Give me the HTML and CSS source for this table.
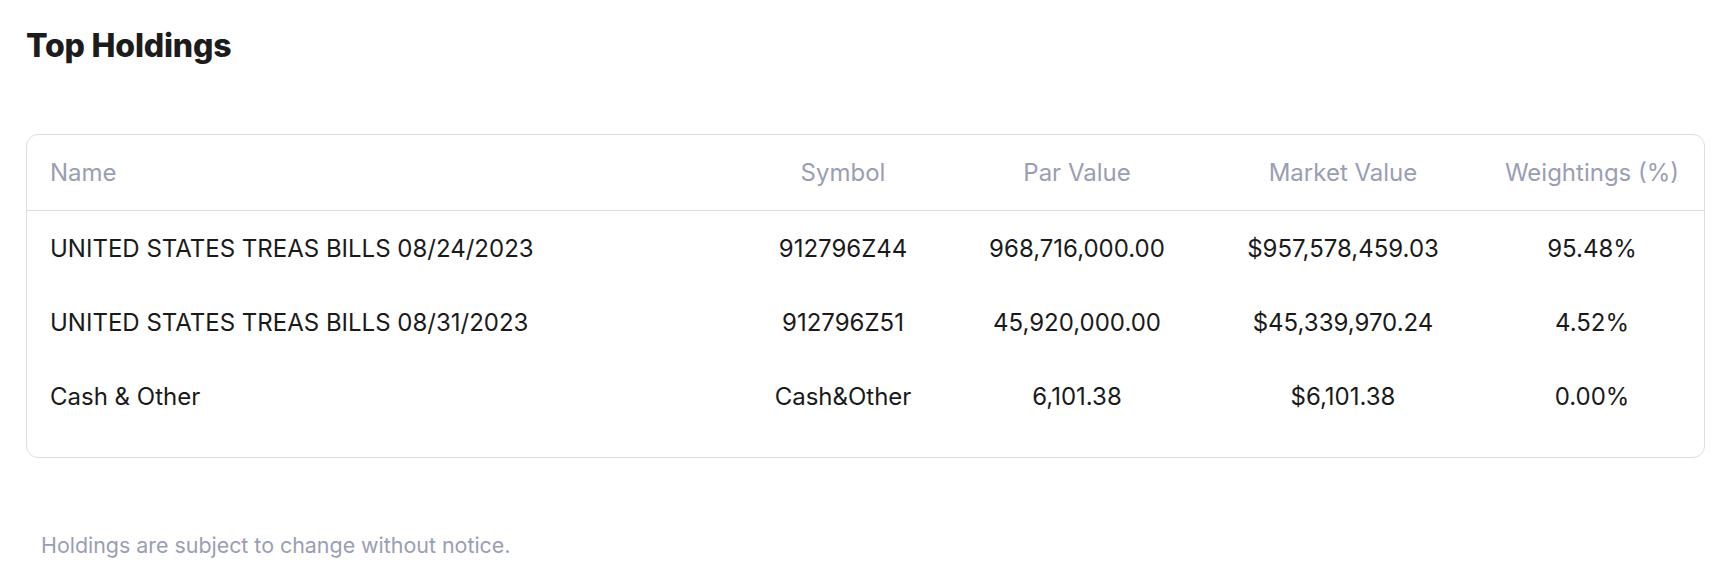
FILE: index.html
```html
<!DOCTYPE html>
<html lang="en">
<head>
<meta charset="utf-8">
<title>Top Holdings</title>
<link rel="stylesheet" href="styles.css">
</head>
<body>
<section class="holdings">
  <h2 class="title">Top Holdings</h2>
  <div class="card">
    <div class="row head">
      <div class="cell name">Name</div>
      <div class="cell">Symbol</div>
      <div class="cell">Par Value</div>
      <div class="cell">Market Value</div>
      <div class="cell">Weightings (%)</div>
    </div>
    <div class="body">
      <div class="row">
        <div class="cell name">UNITED STATES TREAS BILLS 08/24/2023</div>
        <div class="cell">912796Z44</div>
        <div class="cell">968,716,000.00</div>
        <div class="cell">$957,578,459.03</div>
        <div class="cell">95.48%</div>
      </div>
      <div class="row">
        <div class="cell name">UNITED STATES TREAS BILLS 08/31/2023</div>
        <div class="cell">912796Z51</div>
        <div class="cell">45,920,000.00</div>
        <div class="cell">$45,339,970.24</div>
        <div class="cell">4.52%</div>
      </div>
      <div class="row">
        <div class="cell name">Cash &amp; Other</div>
        <div class="cell">Cash&amp;Other</div>
        <div class="cell">6,101.38</div>
        <div class="cell">$6,101.38</div>
        <div class="cell">0.00%</div>
      </div>
    </div>
  </div>
  <p class="note">Holdings are subject to change without notice.</p>
</section>
</body>
</html>
```

FILE: styles.css
```css
* { box-sizing: border-box; }
html, body { margin: 0; padding: 0; background: #fff; }
body {
  font-family: Inter, "Liberation Sans", sans-serif;
  color: #1a1a1a;
}
.holdings {
  padding: 26px 19px 0 26px;
  display: flex;
  flex-direction: column;
}
.title {
  margin: 0;
  font-size: 32px;
  line-height: 40px;
  font-weight: 800;
  color: #1c1c1c;
  letter-spacing: -0.2px;
}
.card {
  margin-top: 68px;
  border: 1px solid #dddde8;
  border-radius: 12px;
}
.row {
  display: grid;
  grid-template-columns: 711px 210px 258px 274px 1fr;
  align-items: center;
  height: 74px;
  font-size: 24px;
}
.row.head {
  height: 76px;
  border-bottom: 1px solid #dddde8;
  color: #9a9eb5;
  padding-bottom: 1px;
}
.body { padding-bottom: 24px; }
.cell { text-align: center; white-space: nowrap; }
.cell.name { text-align: left; padding-left: 23px; }
.note {
  margin: 73px 0 0 15px;
  font-size: 21.4px;
  line-height: 28px;
  color: #9a9eb5;
}
```
